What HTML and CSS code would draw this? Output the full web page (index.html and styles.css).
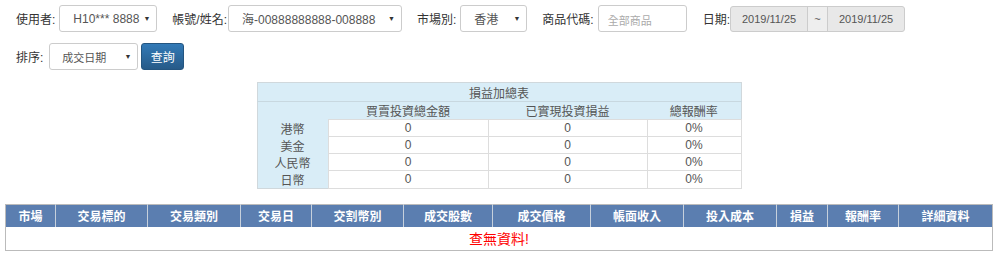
FILE: index.html
```html
<!DOCTYPE html>
<html lang="zh-Hant">
<head>
    <meta charset="UTF-8">
    <title>損益查詢</title>
    <link rel="stylesheet" href="styles.css">
</head>
<body>
    <div class="filter-bar">
        <div class="filter-row">
            <label class="lbl">使用者:</label>
            <div class="sel sel-user"><span>H10*** 8888</span><i class="arrow">▼</i></div>
            <label class="lbl lbl-gap lbl-acct">帳號/姓名:</label>
            <div class="sel sel-acct"><span>海-00888888888-008888</span><i class="arrow">▼</i></div>
            <label class="lbl lbl-gap">市場別:</label>
            <div class="sel sel-mkt"><span>香港</span><i class="arrow">▼</i></div>
            <label class="lbl lbl-gap">商品代碼:</label>
            <div class="txt-input">全部商品</div>
            <label class="lbl lbl-gap-date">日期:</label>
            <div class="date-group">
                <div class="date-box">2019/11/25</div>
                <div class="date-sep">~</div>
                <div class="date-box">2019/11/25</div>
            </div>
        </div>
        <div class="filter-row row2">
            <label class="lbl lbl-sort">排序:</label>
            <div class="sel sel-sort"><span>成交日期</span><i class="arrow">▼</i></div>
            <button class="btn-query">查詢</button>
        </div>
    </div>

    <table class="summary">
        <colgroup>
            <col style="width:71px">
            <col style="width:160px">
            <col style="width:159px">
            <col style="width:94px">
        </colgroup>
        <tr><th colspan="4" class="sum-title">損益加總表</th></tr>
        <tr><th></th><th>買賣投資總金額</th><th>已實現投資損益</th><th>總報酬率</th></tr>
        <tr><th>港幣</th><td>0</td><td>0</td><td>0%</td></tr>
        <tr><th>美金</th><td>0</td><td>0</td><td>0%</td></tr>
        <tr><th>人民幣</th><td>0</td><td>0</td><td>0%</td></tr>
        <tr><th>日幣</th><td>0</td><td>0</td><td>0%</td></tr>
    </table>

    <table class="result">
        <colgroup>
            <col style="width:50px">
            <col style="width:92px">
            <col style="width:93px">
            <col style="width:71px">
            <col style="width:92px">
            <col style="width:89px">
            <col style="width:98px">
            <col style="width:93px">
            <col style="width:93px">
            <col style="width:51px">
            <col style="width:71px">
            <col>
        </colgroup>
        <tr>
            <th>市場</th><th>交易標的</th><th>交易類別</th><th>交易日</th><th>交割幣別</th><th>成交股數</th>
            <th>成交價格</th><th>帳面收入</th><th>投入成本</th><th>損益</th><th>報酬率</th><th>詳細資料</th>
        </tr>
        <tr><td colspan="12" class="no-data">查無資料!</td></tr>
    </table>
</body>
</html>
```

FILE: styles.css
```css
body {
    margin: 0;
    padding: 5px 7px 0 5px;
    background: #fff;
    color: #333;
    font-family: "Liberation Sans", "Noto Sans CJK TC", sans-serif;
    font-size: 12px;
}

.filter-bar {
    padding-left: 11px;
}
.filter-row {
    display: flex;
    align-items: center;
    height: 27px;
}
.row2 {
    margin-top: 11px;
}
.lbl {
    margin-right: 4px;
    white-space: nowrap;
    font-size: 12px;
}
.lbl-gap { margin-left: 15px; }
.lbl-acct { margin-right: 1px; }
.lbl-gap-date { margin-left: 16px; margin-right: 0; }
.lbl-sort { margin-right: 6px; }

.sel {
    box-sizing: border-box;
    height: 27px;
    border: 1px solid #ccc;
    border-radius: 3px;
    display: flex;
    align-items: center;
    padding: 0 6px 0 13px;
    color: #555;
    white-space: nowrap;
    background: #fff;
}
.sel .arrow {
    margin-left: auto;
    font-style: normal;
    font-size: 7px;
    color: #333;
}
.sel-user { width: 98px; }
.sel-acct { width: 174px; }
.sel-mkt { width: 67px; }
.sel-sort { width: 89px; padding-left: 12px; font-size: 11px; }

.txt-input {
    box-sizing: border-box;
    width: 89px;
    height: 27px;
    border: 1px solid #ccc;
    border-radius: 3px;
    padding: 6px 9px;
    color: #aaa;
    font-size: 11px;
}

.date-group {
    display: flex;
    height: 24px;
    border: 1px solid #ccc;
    border-radius: 3px;
    overflow: hidden;
    font-size: 11px;
    color: #555;
    background: #e8e8e8;
}
.date-box {
    width: 76px;
    text-align: center;
    line-height: 24px;
}
.date-sep {
    width: 19px;
    text-align: center;
    line-height: 24px;
    border-left: 1px solid #ccc;
    border-right: 1px solid #ccc;
    background: #eee;
}

.btn-query {
    margin-left: 3px;
    height: 27px;
    width: 43px;
    border: 1px solid #245580;
    border-radius: 3px;
    background: linear-gradient(#337ab7, #265a88);
    color: #fff;
    font-family: inherit;
    font-size: 12px;
    padding: 0;
}

.summary {
    margin: 12px auto 0;
    border-collapse: collapse;
    font-size: 12px;
    color: #555;
    table-layout: fixed;
    background: #d9edf7;
    border: 1px solid #d0d8dc;
}
.summary th {
    font-weight: normal;
    height: 17px;
    padding: 0;
    text-align: center;
}
.summary .sum-title {
    height: 18px;
    border-bottom: 1px solid #c8d8e0;
}
.summary td {
    background: #fff;
    border: 1px solid #ddd;
    height: 16px;
    padding: 0;
    text-align: center;
}

.result {
    margin-top: 15px;
    width: 988px;
    border-collapse: collapse;
    table-layout: fixed;
    border: 1px solid #bbb;
}
.result th {
    background: #5b7eb0;
    color: #fff;
    font-weight: bold;
    font-size: 12px;
    height: 22px;
    padding: 0;
    border-left: 1px solid #c6d0dc;
    text-align: center;
}
.result th:first-child { border-left: none; }
.result .no-data {
    height: 23px;
    text-align: center;
    color: #f00;
    font-size: 14px;
    padding: 0;
}
```
